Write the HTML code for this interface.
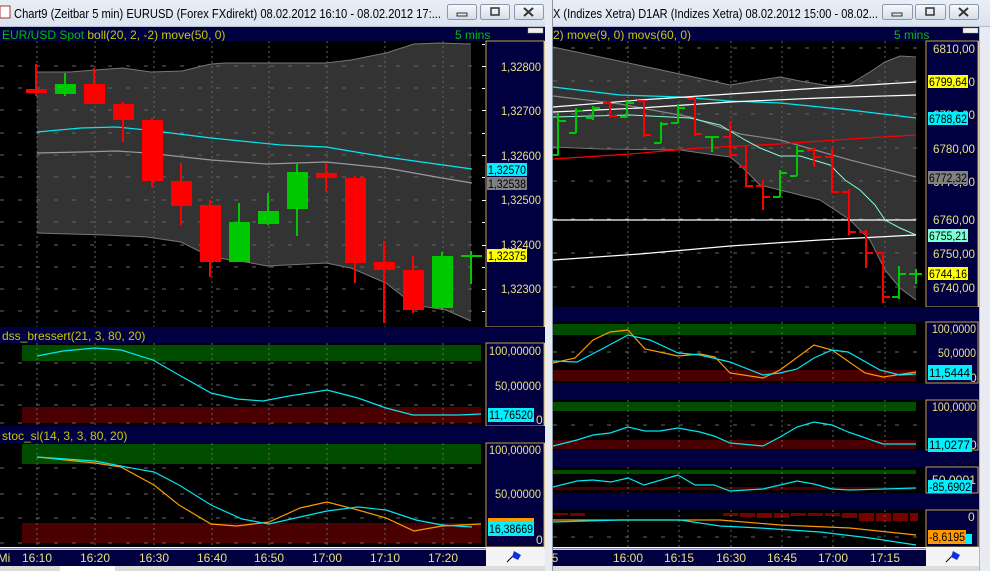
<!DOCTYPE html>
<html><head><meta charset="utf-8"><style>
html,body{margin:0;padding:0;background:#f0f0f0;overflow:hidden}
svg{display:block;font-family:"Liberation Sans",sans-serif}
</style></head><body>
<svg width="990" height="571" viewBox="0 0 990 571" xmlns="http://www.w3.org/2000/svg">
<defs>
<linearGradient id="tb" x1="0" y1="0" x2="0" y2="1"><stop offset="0" stop-color="#e9eff6"/><stop offset="1" stop-color="#d9e3ee"/></linearGradient>
<linearGradient id="bt" x1="0" y1="0" x2="0" y2="1"><stop offset="0" stop-color="#f8fafc"/><stop offset="1" stop-color="#d4dde8"/></linearGradient>
</defs>
<rect x="0" y="0" width="990" height="571" fill="#eef1f5"/>
<!-- ========== LEFT WINDOW ========== -->
<rect x="0" y="0" width="546" height="27" fill="url(#tb)"/>
<rect x="0" y="6" width="10" height="12" fill="#fff" stroke="#a33" stroke-width="1"/>
<text x="14" y="18" font-size="13" fill="#000" textLength="427" lengthAdjust="spacingAndGlyphs">Chart9 (Zeitbar 5 min)  EURUSD (Forex FXdirekt) 08.02.2012 16:10 - 08.02.2012 17:...</text>
<g stroke="#8a98aa" fill="url(#bt)"><rect x="447.5" y="4.5" width="29" height="15" rx="2"/><rect x="480.5" y="4.5" width="29" height="15" rx="2"/><rect x="514.5" y="4.5" width="29" height="15" rx="2"/></g>
<rect x="457" y="13" width="10" height="3" fill="none" stroke="#333"/>
<rect x="491" y="8" width="8" height="7" fill="none" stroke="#333" stroke-width="1.5"/>
<path d="M524 8 L533 16 M533 8 L524 16" stroke="#333" stroke-width="2"/>
<rect x="0" y="26" width="546" height="1" fill="#b0bccb"/>
<rect x="0" y="27" width="545" height="14" fill="#000040"/>
<text x="2" y="39" font-size="12"><tspan fill="#00c000">EUR/USD Spot </tspan><tspan fill="#c8c800">boll(20, 2, -2) move(50, 0)</tspan></text>
<text x="455" y="39" font-size="12" fill="#00c000">5 mins</text>
<rect x="528" y="28" width="15" height="5" fill="#f0f0f0" stroke="#999" stroke-width=".5"/>
<!-- main chart -->
<rect x="0" y="41" width="486" height="286" fill="#000"/>
<polygon fill="#333" points="37,72 70,72 95,70 123,68 151,72 182,71 211,64 225,63 326,63 351,60 386,53 414,44 439,43 471,44 471,321 446,310 414,305 386,283 351,268 326,263 267,266 246,262 211,257 181,242 147,237 105,235 37,233"/>
<polyline fill="none" stroke="#777" stroke-width="1" points="37,72 70,72 95,70 123,68 151,72 182,71 211,64 225,63 326,63 351,60 386,53 414,44 439,43 471,44"/>
<polyline fill="none" stroke="#777" stroke-width="1" points="37,233 105,235 147,237 181,242 211,257 246,262 267,266 326,263 351,268 386,283 414,305 446,310 471,321"/>
<g stroke="#666" stroke-dasharray="2,3" stroke-width="1">
<path d="M37 41V327M95 41V327M154 41V327M212 41V327M269 41V327M327 41V327M385 41V327M443 41V327"/>
<path d="M0 66H482M0 88H482M0 110H482M0 133H482M0 155H482M0 177H482M0 200H482M0 222H482M0 245H482M0 267H482M0 289H482M0 311H482" stroke-dasharray="4,14"/>
</g>
<polyline fill="none" stroke="#00e8f0" stroke-width="1.2" points="37,132 81,128 116,127 147,130 211,138 281,145 326,147 386,157 472,169"/>
<polyline fill="none" stroke="#999" stroke-width="1.2" points="37,153 81,152 116,151 147,153 211,160 267,164 326,162 386,168 442,178 472,183"/>
<g stroke-width="2">
<g stroke="#f00" fill="#f00">
<path d="M36 64V96"/><rect x="26" y="89" width="21" height="4" stroke="none"/>
<path d="M94 68V104"/><rect x="84" y="84" width="21" height="20" stroke="none"/>
<path d="M123 102V142"/><rect x="113" y="104" width="21" height="16" stroke="none"/>
<path d="M152 118V187"/><rect x="142" y="120" width="21" height="61" stroke="none"/>
<path d="M181 163V225"/><rect x="171" y="181" width="21" height="25" stroke="none"/>
<path d="M210 200V277"/><rect x="200" y="205" width="21" height="57" stroke="none"/>
<path d="M326 163V192"/><rect x="316" y="173" width="21" height="5" stroke="none"/>
<path d="M355 176V283"/><rect x="345" y="178" width="21" height="85" stroke="none"/>
<path d="M384 241V323"/><rect x="374" y="262" width="21" height="8" stroke="none"/>
<path d="M413 256V313"/><rect x="403" y="270" width="21" height="40" stroke="none"/>
</g>
<g stroke="#00c800" fill="#00c800">
<path d="M65 73V96"/><rect x="55" y="84" width="21" height="10" stroke="none"/>
<path d="M239 203V262"/><rect x="229" y="222" width="21" height="40" stroke="none"/>
<path d="M268 193V225"/><rect x="258" y="211" width="21" height="13" stroke="none"/>
<path d="M297 164V236"/><rect x="287" y="172" width="21" height="37" stroke="none"/>
<path d="M442 252V310"/><rect x="432" y="256" width="21" height="52" stroke="none"/>
<path d="M471 251V284M461 256H482"/>
</g>
</g>
<rect x="486" y="41" width="58" height="286" fill="#000040" stroke="#c8a040" stroke-width="1"/>
<g fill="#fff"><path d="M482 44h3v1h-3zM482 66h4v1h-4zM482 88h3v1h-3zM482 110h4v1h-4zM482 133h3v1h-3zM482 155h4v1h-4zM482 177h3v1h-3zM482 200h4v1h-4zM482 222h3v1h-3zM482 245h4v1h-4zM482 267h3v1h-3zM482 289h4v1h-4zM482 311h3v1h-3z"/></g>
<g font-size="12" fill="#e8e080">
<text x="501" y="71" textLength="40" lengthAdjust="spacingAndGlyphs">1,32800</text><text x="501" y="115" textLength="40" lengthAdjust="spacingAndGlyphs">1,32700</text><text x="501" y="160" textLength="40" lengthAdjust="spacingAndGlyphs">1,32600</text><text x="501" y="204" textLength="40" lengthAdjust="spacingAndGlyphs">1,32500</text><text x="501" y="249" textLength="40" lengthAdjust="spacingAndGlyphs">1,32400</text><text x="501" y="293" textLength="40" lengthAdjust="spacingAndGlyphs">1,32300</text>
</g>
<rect x="487" y="163" width="40" height="13" fill="#00f0ff"/><text x="488" y="174" font-size="12" fill="#000" textLength="38" lengthAdjust="spacingAndGlyphs">1,32570</text>
<rect x="487" y="177" width="40" height="13" fill="#808080"/><text x="488" y="188" font-size="12" fill="#000" textLength="38" lengthAdjust="spacingAndGlyphs">1,32538</text>
<rect x="487" y="249" width="40" height="13" fill="#ffff00"/><text x="488" y="260" font-size="12" fill="#000" textLength="38" lengthAdjust="spacingAndGlyphs">1,32375</text>
<!-- dss panel -->
<rect x="0" y="327" width="545" height="16" fill="#000040"/>
<text x="2" y="340" font-size="12" fill="#c8c800">dss_bressert(21, 3, 80, 20)</text>
<rect x="0" y="343" width="486" height="83" fill="#000"/>
<rect x="22" y="345" width="459" height="16" fill="#004d00"/>
<rect x="22" y="407" width="459" height="16" fill="#4a0000"/>
<g stroke="#666" stroke-dasharray="2,3"><path d="M37 343V426M95 343V426M154 343V426M212 343V426M269 343V426M327 343V426M385 343V426M443 343V426"/>
<path d="M0 363H482M0 385H482M0 405H482M0 423H482" stroke-dasharray="4,14"/></g>
<polyline fill="none" stroke="#00e8f0" stroke-width="1.2" points="37,356 63,351 95,348 121,350 153,360 179,375 211,393 237,399 263,401 289,396 327,390 358,398 386,408 413,415 458,415 481,414"/>
<rect x="486" y="343" width="58" height="83" fill="#000040" stroke="#c8a040"/>
<g font-size="12" fill="#e8e080"><text x="489" y="355" textLength="52" lengthAdjust="spacingAndGlyphs">100,00000</text><text x="495" y="390" textLength="46" lengthAdjust="spacingAndGlyphs">50,00000</text><text x="536" y="424">0</text></g>
<rect x="488" y="408" width="46" height="14" fill="#00f0ff"/><text x="489" y="419" font-size="12" fill="#000" textLength="44" lengthAdjust="spacingAndGlyphs">11,76520</text>
<!-- stoc panel -->
<rect x="0" y="426" width="545" height="17" fill="#000040"/>
<text x="2" y="440" font-size="12" fill="#c8c800">stoc_sl(14, 3, 3, 80, 20)</text>
<rect x="0" y="443" width="486" height="104" fill="#000"/>
<rect x="22" y="444" width="459" height="20" fill="#004d00"/>
<rect x="22" y="523" width="459" height="20" fill="#4a0000"/>
<g stroke="#666" stroke-dasharray="2,3"><path d="M37 443V547M95 443V547M154 443V547M212 443V547M269 443V547M327 443V547M385 443V547M443 443V547"/>
<path d="M0 468H482M0 494H482M0 518H482M0 543H482" stroke-dasharray="4,14"/></g>
<polyline fill="none" stroke="#ff9900" stroke-width="1.2" points="37,457 95,463 121,467 154,485 179,505 211,524 237,526 269,522 300,508 327,502 358,510 386,518 414,531 442,526 481,524"/>
<polyline fill="none" stroke="#00e8f0" stroke-width="1.2" points="37,457 95,461 126,467 154,472 179,485 211,505 242,519 269,524 300,517 327,511 358,507 386,510 416,520 442,525 472,527"/>
<rect x="486" y="443" width="58" height="104" fill="#000040" stroke="#c8a040"/>
<g font-size="12" fill="#e8e080"><text x="489" y="454" textLength="52" lengthAdjust="spacingAndGlyphs">100,00000</text><text x="495" y="498" textLength="46" lengthAdjust="spacingAndGlyphs">50,00000</text><text x="536" y="544">0</text></g>
<rect x="488" y="518" width="46" height="6" fill="#ff9900"/>
<rect x="488" y="522" width="46" height="14" fill="#00f0ff"/><text x="489" y="533" font-size="12" fill="#000" textLength="44" lengthAdjust="spacingAndGlyphs">16,38669</text>
<!-- time axis -->
<rect x="0" y="547" width="486" height="19" fill="#000040"/>
<rect x="0" y="547" width="486" height="1.5" fill="#fff"/><rect x="0" y="549" width="486" height="1" fill="#e8e080"/>
<g font-size="12" fill="#e8e080" text-anchor="middle"><text x="4" y="562">Mi</text><text x="37" y="562">16:10</text><text x="95" y="562">16:20</text><text x="154" y="562">16:30</text><text x="212" y="562">16:40</text><text x="269" y="562">16:50</text><text x="327" y="562">17:00</text><text x="385" y="562">17:10</text><text x="443" y="562">17:20</text></g>
<rect x="486" y="547" width="58" height="19" fill="#f4f4f4"/>
<path d="M507 562 L516 553" stroke="#000" stroke-width="1"/><path d="M514 551 L521 555 L518 560 L512 557 Z" fill="#1030e0"/>
<rect x="0" y="566" width="545" height="5" fill="#dcdcdc"/><rect x="60" y="566" width="55" height="5" fill="#fff"/>
<rect x="545" y="0" width="8" height="571" fill="#e8ecf2"/><rect x="552" y="0" width="1" height="571" fill="#8896a8"/>
<!-- ========== RIGHT WINDOW ========== -->
<rect x="553" y="0" width="437" height="27" fill="url(#tb)"/>
<text x="553" y="18" font-size="13" fill="#000" textLength="325" lengthAdjust="spacingAndGlyphs">X (Indizes Xetra) D1AR (Indizes Xetra) 08.02.2012 15:00 - 08.02...</text>
<g stroke="#8a98aa" fill="url(#bt)"><rect x="882.5" y="4.5" width="30" height="15" rx="2"/><rect x="915.5" y="4.5" width="30" height="15" rx="2"/><rect x="949.5" y="4.5" width="29" height="15" rx="2"/></g>
<rect x="892" y="13" width="10" height="3" fill="none" stroke="#333"/>
<rect x="926" y="8" width="8" height="7" fill="none" stroke="#333" stroke-width="1.5"/>
<path d="M959 8 L968 16 M968 8 L959 16" stroke="#333" stroke-width="2"/>
<rect x="553" y="26" width="437" height="1" fill="#b0bccb"/>
<rect x="553" y="27" width="426" height="14" fill="#000040"/>
<text x="553" y="39" font-size="12" fill="#c8c800">2) move(9, 0) movs(60, 0)</text>
<text x="894" y="39" font-size="12" fill="#00c000">5 mins</text>
<rect x="963" y="28" width="15" height="5" fill="#f0f0f0" stroke="#999" stroke-width=".5"/>
<rect x="979" y="27" width="11" height="544" fill="#e8ecf2"/><rect x="979" y="27" width="1" height="544" fill="#b0bccb"/>
<rect x="553" y="41" width="373" height="266" fill="#000"/>
<polygon fill="#333" points="553,47 600,57 680,74 730,85 760,80 780,77 800,81 830,86 850,84 870,72 885,62 900,56 916,57 916,300 900,288 885,270 870,240 850,220 820,200 780,190 760,185 740,165 730,157 715,155 680,150 600,149 553,147"/>
<polyline fill="none" stroke="#777" points="553,47 600,57 680,74 730,85 760,80 780,77 800,81 830,86 850,84 870,72 885,62 900,56 916,57"/>
<polyline fill="none" stroke="#777" points="553,147 600,149 680,150 715,155 730,157 740,165 760,185 780,190 820,200 850,220 870,240 885,270 900,288 916,300"/>
<g stroke="#666" stroke-dasharray="2,3"><path d="M628 41V307M679 41V307M731 41V307M782 41V307M833 41V307M885 41V307"/>
<path d="M553 48H920M553 81H920M553 114H920M553 148H920M553 181H920M553 219H920M553 253H920M553 287H920" stroke-dasharray="4,14"/></g>
<polyline fill="none" stroke="#888" stroke-width="1.2" points="553,96 620,104 690,117 740,134 780,140 850,160 916,177"/>
<polyline fill="none" stroke="#00e8f0" stroke-width="1.2" points="553,87 620,95 680,97 730,101 780,103 850,110 916,118"/>
<polyline fill="none" stroke="#fff" stroke-width="1.2" points="553,107 640,100 730,94 820,88 916,82"/>
<polyline fill="none" stroke="#fff" stroke-width="1.2" points="553,112 640,108 730,102 820,98 916,95"/>
<polyline fill="none" stroke="#f00" stroke-width="1.2" points="553,159 630,154 700,148 780,144 850,139 916,135"/>
<polyline fill="none" stroke="#7fffd4" stroke-width="1" points="553,117 630,115 690,118 720,125 745,140 760,148 780,156 800,156 830,165 845,180 860,190 875,205 885,220 900,228 916,235"/>
<path d="M553 220H916" stroke="#fff" stroke-width="1.2"/>
<polyline fill="none" stroke="#fff" stroke-width="1.2" points="553,260 640,254 730,246 820,240 916,235"/>
<g stroke-width="2" fill="none">
<g stroke="#00c800">
<path d="M558 113V155M553 155H558M558 121H566"/>
<path d="M576 108V133M569 133H576M576 111H583"/>
<path d="M593 106V120M586 118H593M593 108H600"/>
<path d="M627 101V117M620 117H627M627 103H634"/>
<path d="M661 122V143M654 143H661M661 124H668"/>
<path d="M678 104V123M671 123H678M678 108H685"/>
<path d="M712 136V152M705 137H712M712 137H719"/>
<path d="M780 170V197M773 197H780M780 173H787"/>
<path d="M797 146V176M790 176H797M797 151H804"/>
<path d="M899 266V299M892 297H899M899 274H906"/>
<path d="M916 269V284M909 274H916M916 274H922"/>
</g>
<g stroke="#f00">
<path d="M610 101V118M603 103H610M610 116H617"/>
<path d="M644 100V137M637 101H644M644 135H651"/>
<path d="M695 97V136M688 99H695M695 134H702"/>
<path d="M730 122V157M723 137H730M730 155H737"/>
<path d="M746 146V187M739 167H746M746 186H753"/>
<path d="M763 180V210M756 186H763M763 197H770"/>
<path d="M814 147V167M807 150H814M814 157H821"/>
<path d="M832 148V193M825 157H832M832 192H839"/>
<path d="M849 189V235M842 192H849M849 232H856"/>
<path d="M866 230V268M859 232H866M866 253H873"/>
<path d="M883 253V303M876 253H883M883 297H890"/>
</g>
</g>
<rect x="926" y="41" width="52" height="266" fill="#000040" stroke="#c8a040"/>
<g font-size="12" fill="#e8e080"><text x="933" y="53" textLength="42" lengthAdjust="spacingAndGlyphs">6810,00</text><text x="933" y="86" textLength="42" lengthAdjust="spacingAndGlyphs">6800,00</text><text x="933" y="119" textLength="42" lengthAdjust="spacingAndGlyphs">6790,00</text><text x="933" y="153" textLength="42" lengthAdjust="spacingAndGlyphs">6780,00</text><text x="933" y="186" textLength="42" lengthAdjust="spacingAndGlyphs">6770,00</text><text x="933" y="224" textLength="42" lengthAdjust="spacingAndGlyphs">6760,00</text><text x="933" y="258" textLength="42" lengthAdjust="spacingAndGlyphs">6750,00</text><text x="933" y="292" textLength="42" lengthAdjust="spacingAndGlyphs">6740,00</text></g>
<rect x="928" y="75" width="40" height="13" fill="#ffff00"/><text x="929" y="86" font-size="12" fill="#000" textLength="38" lengthAdjust="spacingAndGlyphs">6799,64</text>
<rect x="928" y="112" width="40" height="13" fill="#00f0ff"/><text x="929" y="123" font-size="12" fill="#000" textLength="38" lengthAdjust="spacingAndGlyphs">6788,62</text>
<rect x="928" y="171" width="40" height="13" fill="#808080"/><text x="929" y="182" font-size="12" fill="#000" textLength="38" lengthAdjust="spacingAndGlyphs">6772,32</text>
<rect x="928" y="229" width="40" height="13" fill="#7fffd4"/><text x="929" y="240" font-size="12" fill="#000" textLength="38" lengthAdjust="spacingAndGlyphs">6755,21</text>
<rect x="928" y="267" width="40" height="13" fill="#ffff00"/><text x="929" y="278" font-size="12" fill="#000" textLength="38" lengthAdjust="spacingAndGlyphs">6744,16</text>
<!-- right panels -->
<rect x="553" y="307" width="426" height="259" fill="#000040"/>
<rect x="553" y="322" width="373" height="61" fill="#000"/>
<rect x="553" y="324" width="363" height="11" fill="#004d00"/><rect x="553" y="370" width="363" height="11" fill="#4a0000"/>
<rect x="553" y="400" width="373" height="50" fill="#000"/>
<rect x="553" y="402" width="363" height="9" fill="#004d00"/><rect x="553" y="440" width="363" height="9" fill="#4a0000"/>
<rect x="553" y="467" width="373" height="26" fill="#000"/>
<rect x="553" y="470" width="363" height="4" fill="#004d00"/><rect x="553" y="487" width="363" height="3" fill="#4a0000"/>
<rect x="553" y="510" width="373" height="37" fill="#000"/>
<g fill="#7a0000"><rect x="553" y="513" width="15" height="2"/><rect x="570" y="513" width="15" height="3"/><rect x="723" y="513" width="15" height="3"/><rect x="740" y="513" width="15" height="4"/><rect x="757" y="513" width="15" height="5"/><rect x="774" y="513" width="15" height="5"/><rect x="791" y="513" width="15" height="3"/><rect x="808" y="513" width="15" height="3"/><rect x="825" y="513" width="15" height="3"/><rect x="842" y="513" width="15" height="5"/><rect x="859" y="513" width="15" height="8"/><rect x="876" y="513" width="15" height="8"/><rect x="893" y="513" width="15" height="8"/><rect x="910" y="513" width="8" height="8"/></g>
<g stroke="#666" stroke-dasharray="2,3"><path d="M628 322V383M679 322V383M731 322V383M782 322V383M833 322V383M885 322V383M628 400V450M679 400V450M731 400V450M782 400V450M833 400V450M885 400V450M628 467V493M679 467V493M731 467V493M782 467V493M833 467V493M885 467V493M628 510V547M679 510V547M731 510V547M782 510V547M833 510V547M885 510V547"/>
<path d="M553 352H920M553 425H920M553 537H920" stroke-dasharray="4,14"/></g>
<polyline fill="none" stroke="#ff9900" stroke-width="1.2" points="553,363 575,358 593,340 610,332 628,330 645,349 678,356 700,354 715,357 730,373 763,378 780,370 814,345 832,350 865,373 883,377 916,372"/>
<polyline fill="none" stroke="#00e8f0" stroke-width="1.2" points="553,361 577,362 600,350 628,335 650,340 678,353 700,355 730,362 763,375 780,373 797,369 814,358 832,350 848,352 880,370 900,375 916,374"/>
<polyline fill="none" stroke="#00e8f0" stroke-width="1.2" points="553,446 577,440 593,435 610,433 628,427 645,431 660,431 678,428 700,432 714,436 730,443 763,446 780,437 797,427 814,422 832,425 848,432 883,444 916,444"/>
<polyline fill="none" stroke="#00e8f0" stroke-width="1.2" points="553,487 577,481 593,480 611,482 628,478 644,485 678,475 695,485 714,485 730,491 763,489 797,481 814,484 832,489 850,490 916,488"/>
<polyline fill="none" stroke="#ff9900" stroke-width="1.2" points="553,520 640,520 720,520 780,525 850,528 916,535"/>
<polyline fill="none" stroke="#00e8f0" stroke-width="1.2" points="553,522 620,520 680,520 720,526 760,528 820,532 870,538 916,545"/>
<g fill="#000040" stroke="#c8a040"><rect x="926" y="322" width="52" height="61"/><rect x="926" y="400" width="52" height="50"/><rect x="926" y="467" width="52" height="26"/><rect x="926" y="510" width="52" height="37"/></g>
<g font-size="12" fill="#e8e080"><text x="932" y="333" textLength="44" lengthAdjust="spacingAndGlyphs">100,0000</text><text x="938" y="357" textLength="38" lengthAdjust="spacingAndGlyphs">50,0000</text><text x="970" y="382">0</text><text x="932" y="411" textLength="44" lengthAdjust="spacingAndGlyphs">100,0000</text><text x="970" y="449">0</text><text x="932" y="484" textLength="44" lengthAdjust="spacingAndGlyphs">50,0001</text><text x="968" y="521">0</text></g>
<rect x="928" y="365" width="44" height="15" fill="#00f0ff"/><text x="929" y="377" font-size="12" fill="#000" textLength="41" lengthAdjust="spacingAndGlyphs">11,5444</text>
<rect x="928" y="438" width="44" height="14" fill="#00f0ff"/><text x="929" y="449" font-size="12" fill="#000" textLength="41" lengthAdjust="spacingAndGlyphs">11,0277</text>
<rect x="928" y="480" width="44" height="13" fill="#00f0ff"/><text x="929" y="491" font-size="12" fill="#000" textLength="42" lengthAdjust="spacingAndGlyphs">-85,6902</text>
<rect x="928" y="534" width="44" height="10" fill="#00f0ff"/>
<rect x="928" y="530" width="38" height="13" fill="#ff9900"/><text x="929" y="541" font-size="12" fill="#000" textLength="36" lengthAdjust="spacingAndGlyphs">-8,6195</text>
<rect x="553" y="547" width="373" height="1.5" fill="#fff"/><rect x="553" y="549" width="373" height="1" fill="#e8e080"/>
<g font-size="12" fill="#e8e080" text-anchor="middle"><text x="555" y="562">5</text><text x="628" y="562">16:00</text><text x="679" y="562">16:15</text><text x="731" y="562">16:30</text><text x="782" y="562">16:45</text><text x="833" y="562">17:00</text><text x="885" y="562">17:15</text></g>
<rect x="926" y="547" width="53" height="19" fill="#f4f4f4"/>
<path d="M946 562 L955 553" stroke="#000"/><path d="M953 551 L960 555 L957 560 L951 557 Z" fill="#1030e0"/>
<rect x="553" y="566" width="426" height="5" fill="#dcdcdc"/>
</svg>
</body></html>
